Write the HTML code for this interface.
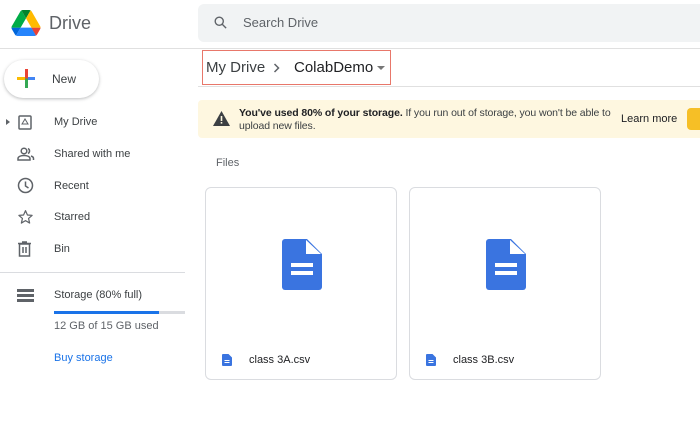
<!DOCTYPE html>
<html><head><style>
*{margin:0;padding:0;box-sizing:border-box}
body{width:700px;height:428px;overflow:hidden;background:#fff;font-family:"Liberation Sans",sans-serif;color:#202124;position:relative}
.a{position:absolute}
.nav{position:absolute;left:54px;font-size:11px;color:#3c4043}
.ic{position:absolute;left:17px}
</style></head><body>
<svg class="a" style="left:11px;top:10px" width="30" height="26" viewBox="0 0 87.3 78">
<path d="M6.6 66.85l3.85 6.65c.8 1.4 1.950 2.5 3.3 3.3L27.5 53H0c0 1.55.4 3.1 1.2 4.5z" fill="#0066da"/>
<path d="M43.65 25L29.9 1.2c-1.35.8-2.5 1.9-3.3 3.3L1.2 48.5C.4 49.9 0 51.45 0 53h27.5z" fill="#00ac47"/>
<path d="M73.55 76.8c1.35-.8 2.5-1.9 3.3-3.3l1.6-2.75 7.650-13.25c.8-1.4 1.2-2.95 1.2-4.5H59.8l5.85 11.5z" fill="#ea4335"/>
<path d="M43.65 25L57.4 1.2C56.05.4 54.5 0 52.9 0H34.4c-1.6 0-3.15.45-4.5 1.2z" fill="#00832d"/>
<path d="M59.8 53H27.5L13.75 76.8c1.35.8 2.9 1.2 4.5 1.2h50.8c1.6 0 3.15-.45 4.5-1.2z" fill="#2684fc"/>
<path d="M73.4 26.5L60.7 4.5c-.8-1.4-1.95-2.5-3.3-3.3L43.650 25 59.8 53h27.45c0-1.55-.4-3.1-1.2-4.5z" fill="#ffba00"/>
</svg>
<div class="a" style="left:49px;top:13px;font-size:18px;color:#5f6368">Drive</div>
<div class="a" style="left:198px;top:4px;width:510px;height:38px;background:#f1f3f4;border-radius:6px"></div>
<svg class="a" style="left:213px;top:15px" width="15" height="15" viewBox="0 0 24 24"><circle cx="10" cy="10" r="6.5" fill="none" stroke="#5f6368" stroke-width="2.2"/><path d="M15 15l6 6" stroke="#5f6368" stroke-width="2.2"/></svg>
<div class="a" style="left:243px;top:15px;font-size:13px;color:#5f6368">Search Drive</div>
<div class="a" style="left:0;top:48px;width:700px;height:1px;background:#e0e0e0"></div>
<div class="a" style="left:4px;top:60px;width:95px;height:38px;border-radius:19px;background:#fff;box-shadow:0 1px 3px rgba(60,64,67,.35)"></div>
<div class="a" style="left:17px;top:77px;width:18px;height:3px;background:linear-gradient(90deg,#fbbc04 50%,#4285f4 50%)"></div>
<div class="a" style="left:24.5px;top:69px;width:3px;height:19px;background:linear-gradient(#ea4335 45%,#34a853 55%)"></div>
<div class="a" style="left:52px;top:72px;font-size:12px;color:#3c4043">New</div>
<div class="a" style="left:6px;top:119px;width:0;height:0;border-left:4px solid #5f6368;border-top:3.5px solid transparent;border-bottom:3.5px solid transparent"></div>
<svg class="ic" style="top:115px" width="16" height="15" viewBox="0 0 16 15"><rect x="2" y="1" width="12" height="13" rx="1" fill="none" stroke="#5f6368" stroke-width="1.5"/><path d="M5 9l3-5 3 5z" fill="none" stroke="#5f6368" stroke-width="1"/></svg>
<div class="nav" style="top:116px">My Drive</div>
<svg class="ic" style="top:147px" width="18" height="14" viewBox="0 0 18 14"><circle cx="7" cy="4" r="2.8" fill="none" stroke="#5f6368" stroke-width="1.5"/><path d="M1 13v-1.5c0-2 3-3 6-3s6 1 6 3V13z" fill="none" stroke="#5f6368" stroke-width="1.5"/><path d="M11 1.5a2.8 2.8 0 010 5M14 9c1.5.5 2.5 1.3 2.5 2.5V13" fill="none" stroke="#5f6368" stroke-width="1.5"/></svg>
<div class="nav" style="top:148px">Shared with me</div>
<svg class="ic" style="top:177px" width="17" height="17" viewBox="0 0 17 17"><circle cx="8.5" cy="8.5" r="7" fill="none" stroke="#5f6368" stroke-width="1.5"/><path d="M8.5 4.5v4.5l3 2" fill="none" stroke="#5f6368" stroke-width="1.5"/></svg>
<div class="nav" style="top:180px">Recent</div>
<svg class="ic" style="top:209px" width="17" height="16" viewBox="0 0 24 24"><path d="M12 2.5l2.9 6.5 7 .6-5.3 4.6 1.6 6.9L12 17.5l-6.2 3.6 1.6-6.9L2.1 9.6l7-.6z" fill="none" stroke="#5f6368" stroke-width="1.8" stroke-linejoin="round"/></svg>
<div class="nav" style="top:211px">Starred</div>
<svg class="ic" style="top:241px" width="15" height="16" viewBox="0 0 15 16"><path d="M1 2.5h13M5 1h5" stroke="#5f6368" stroke-width="1.5"/><rect x="2.5" y="3" width="10" height="12" fill="none" stroke="#5f6368" stroke-width="1.5"/><path d="M6 6v6M9 6v6" stroke="#5f6368" stroke-width="1.5"/></svg>
<div class="nav" style="top:243px">Bin</div>
<div class="a" style="left:0;top:272px;width:185px;height:1px;background:#dadce0"></div>
<svg class="ic" style="top:289px" width="17" height="13" viewBox="0 0 17 13"><rect x="0" y="0" width="17" height="3" fill="#5f6368"/><rect x="0" y="5" width="17" height="3" fill="#5f6368"/><rect x="0" y="10" width="17" height="3" fill="#5f6368"/></svg>
<div class="nav" style="top:289px">Storage (80% full)</div>
<div class="a" style="left:54px;top:311px;width:131px;height:3px;background:#dadce0"></div>
<div class="a" style="left:54px;top:311px;width:105px;height:3px;background:#1a73e8"></div>
<div class="nav" style="top:320px;color:#5f6368">12 GB of 15 GB used</div>
<div class="nav" style="top:352px;color:#1a73e8">Buy storage</div>
<div class="a" style="left:202px;top:50px;width:189px;height:35px;border:1.5px solid #e8776a"></div>
<div class="a" style="left:206px;top:59px;font-size:15px;color:#3c4043">My Drive</div>
<svg class="a" style="left:273px;top:63px" width="8" height="10" viewBox="0 0 8 10"><path d="M1.5 1l4 4-4 4" fill="none" stroke="#5f6368" stroke-width="1.5"/></svg>
<div class="a" style="left:294px;top:59px;font-size:15px;color:#202124">ColabDemo</div>
<div class="a" style="left:377px;top:66px;border-top:4px solid #777;border-left:4px solid transparent;border-right:4px solid transparent"></div>
<div class="a" style="left:198px;top:86px;width:502px;height:1px;background:#e0e0e0"></div>
<div class="a" style="left:198px;top:100px;width:510px;height:38px;background:#fef7e0;border-radius:4px"></div>
<svg class="a" style="left:213px;top:111px" width="17" height="15" viewBox="0 0 17 15"><path d="M8.5 0L17 15H0z" fill="#3c4043"/><rect x="7.7" y="5" width="1.6" height="5" fill="#fef7e0"/><rect x="7.7" y="11" width="1.6" height="1.6" fill="#fef7e0"/></svg>
<div class="a" style="left:239px;top:107px;font-size:10.5px;line-height:12.5px;color:#3c4043;white-space:nowrap;letter-spacing:-0.1px"><b style="color:#202124">You've used 80% of your storage.</b> If you run out of storage, you won't be able to<br>upload new files.</div>
<div class="a" style="left:621px;top:113px;font-size:11px;color:#202124">Learn more</div>
<div class="a" style="left:687px;top:108px;width:30px;height:22px;background:#f6bf26;border-radius:4px"></div>
<div class="a" style="left:216px;top:157px;font-size:11px;color:#5f6368">Files</div>
<div class="a" style="left:205px;top:187px;width:192px;height:193px;border:1px solid #dadce0;border-radius:6px"></div>
<div class="a" style="left:409px;top:187px;width:192px;height:193px;border:1px solid #dadce0;border-radius:6px"></div>
<svg class="a" style="left:282px;top:239px" width="40" height="51" viewBox="0 0 40 51"><path d="M3 0h22l15 15v33a3 3 0 01-3 3H3a3 3 0 01-3-3V3a3 3 0 013-3z" fill="#3a74e0"/><path d="M24 1v14h15z" fill="#fff"/><rect x="9" y="24" width="22" height="4" fill="#fff"/><rect x="9" y="32" width="22" height="4" fill="#fff"/></svg>
<svg class="a" style="left:486px;top:239px" width="40" height="51" viewBox="0 0 40 51"><path d="M3 0h22l15 15v33a3 3 0 01-3 3H3a3 3 0 01-3-3V3a3 3 0 013-3z" fill="#3a74e0"/><path d="M24 1v14h15z" fill="#fff"/><rect x="9" y="24" width="22" height="4" fill="#fff"/><rect x="9" y="32" width="22" height="4" fill="#fff"/></svg>
<svg class="a" style="left:222px;top:354px" width="10" height="12" viewBox="0 0 10 12"><path d="M1 0h5.5L10 3.5V11a1 1 0 01-1 1H1a1 1 0 01-1-1V1a1 1 0 011-1z" fill="#3a74e0"/><rect x="2.5" y="6" width="5" height="1" fill="#fff"/><rect x="2.5" y="8" width="5" height="1" fill="#fff"/></svg>
<svg class="a" style="left:426px;top:354px" width="10" height="12" viewBox="0 0 10 12"><path d="M1 0h5.5L10 3.5V11a1 1 0 01-1 1H1a1 1 0 01-1-1V1a1 1 0 011-1z" fill="#3a74e0"/><rect x="2.5" y="6" width="5" height="1" fill="#fff"/><rect x="2.5" y="8" width="5" height="1" fill="#fff"/></svg>
<div class="a" style="left:249px;top:354px;font-size:11px;color:#202124">class 3A.csv</div>
<div class="a" style="left:453px;top:354px;font-size:11px;color:#202124">class 3B.csv</div>
</body></html>
